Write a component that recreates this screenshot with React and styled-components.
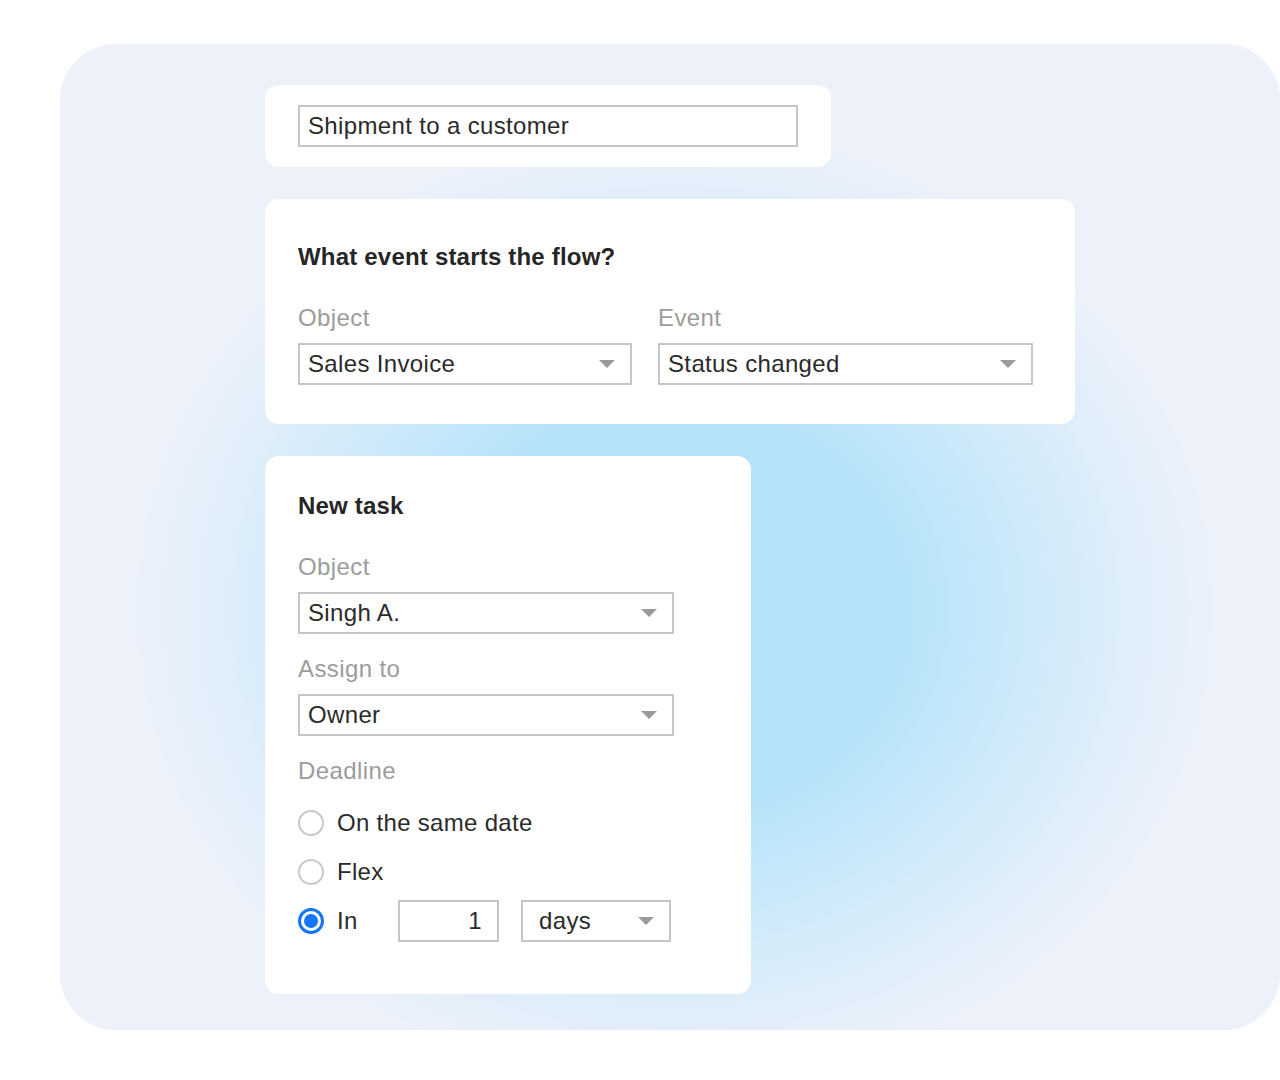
import React from 'react'
import styled, { createGlobalStyle } from 'styled-components'

const GlobalStyle = createGlobalStyle`
  html, body {
    margin: 0;
    padding: 0;
    background: #ffffff;
  }
  body {
    font-family: 'Liberation Sans', Arial, sans-serif;
    color: #2b2b2b;
  }
`

const Page = styled.div`
  width: 1280px;
  height: 1080px;
  padding: 44px 0 0 60px;
  box-sizing: border-box;
  overflow: hidden;
`

const Panel = styled.div`
  width: 1220px;
  height: 986px;
  border-radius: 56px;
  box-sizing: border-box;
  padding: 41px 0 0 205px;
  background:
    radial-gradient(ellipse 540px 480px at 615px 565px,
      #b2e2fb 0%, #b5e3fa 42%, #d4ebfa 72%, #ecf1fa 100%);
  background-color: #ecf1fa;
  display: flex;
  flex-direction: column;
  align-items: flex-start;
  gap: 32px;
`

const Card = styled.div`
  width: ${({ $width }) => $width}px;
  background: #ffffff;
  border-radius: 14px;
  box-sizing: border-box;
  padding: ${({ $pad }) => $pad};
  display: flex;
  flex-direction: column;
`

const Heading = styled.div`
  font-size: 24px;
  line-height: 26px;
  font-weight: 700;
  letter-spacing: 0.2px;
  color: #262626;
`

const Label = styled.div`
  font-size: 24px;
  line-height: 26px;
  letter-spacing: 0.4px;
  color: #9c9c9c;
  margin-top: ${({ $top }) => $top}px;
  margin-bottom: 12px;
`

const Field = styled.div`
  width: ${({ $width }) => $width}px;
  height: 42px;
  box-sizing: border-box;
  border: 2px solid #c6c6c6;
  background: #ffffff;
  display: flex;
  align-items: center;
  justify-content: ${({ $align }) => $align || 'space-between'};
  padding: ${({ $pad }) => $pad || '0 15px 0 8px'};
  font-size: 24px;
  letter-spacing: 0.35px;
  color: #2b2b2b;
  flex-shrink: 0;
`

const Arrow = styled.span`
  width: 0;
  height: 0;
  border-left: 8px solid transparent;
  border-right: 8px solid transparent;
  border-top: 8px solid #9a9a9a;
`

const Row = styled.div`
  display: flex;
  gap: 26px;
`

const Column = styled.div`
  display: flex;
  flex-direction: column;
`

const RadioList = styled.div`
  display: flex;
  flex-direction: column;
  margin-top: 2px;
`

const RadioRow = styled.div`
  display: flex;
  align-items: center;
  height: 49px;
  font-size: 24px;
  letter-spacing: 0.3px;
  color: #2b2b2b;
`

const Circle = styled.span`
  width: 26px;
  height: 26px;
  box-sizing: border-box;
  border-radius: 50%;
  border: ${({ $on }) => ($on ? '3px solid #1576f9' : '2px solid #c8c8c8')};
  display: flex;
  align-items: center;
  justify-content: center;
  margin-right: 13px;
  flex-shrink: 0;

  &::after {
    content: '';
    display: ${({ $on }) => ($on ? 'block' : 'none')};
    width: 14px;
    height: 14px;
    border-radius: 50%;
    background: #1576f9;
  }
`

const RadioText = styled.span`
  width: ${({ $width }) => ($width ? `${$width}px` : 'auto')};
`

const Spacer = styled.span`
  width: 22px;
  flex-shrink: 0;
`

const Select = ({ width, pad, children }) => (
  <Field $width={width} $pad={pad}>
    <span>{children}</span>
    <Arrow />
  </Field>
)

const App = () => (
  <>
    <GlobalStyle />
    <Page>
      <Panel>
        <Card $width={566} $pad="20px 33px">
          <Field $width={500} $align="flex-start">Shipment to a customer</Field>
        </Card>

        <Card $width={810} $pad="45px 33px 39px">
          <Heading>What event starts the flow?</Heading>
          <Row>
            <Column>
              <Label $top={35}>Object</Label>
              <Select width={334}>Sales Invoice</Select>
            </Column>
            <Column>
              <Label $top={35}>Event</Label>
              <Select width={375}>Status changed</Select>
            </Column>
          </Row>
        </Card>

        <Card $width={486} $pad="37px 33px 49px">
          <Heading>New task</Heading>
          <Label $top={35}>Object</Label>
          <Select width={376}>Singh A.</Select>
          <Label $top={22}>Assign to</Label>
          <Select width={376}>Owner</Select>
          <Label $top={22}>Deadline</Label>
          <RadioList>
            <RadioRow>
              <Circle />
              <RadioText>On the same date</RadioText>
            </RadioRow>
            <RadioRow>
              <Circle />
              <RadioText>Flex</RadioText>
            </RadioRow>
            <RadioRow>
              <Circle $on />
              <RadioText $width={61}>In</RadioText>
              <Field $width={101} $align="flex-end">1</Field>
              <Spacer />
              <Select width={150} pad="0 15px 0 16px">days</Select>
            </RadioRow>
          </RadioList>
        </Card>
      </Panel>
    </Page>
  </>
)

export default App
